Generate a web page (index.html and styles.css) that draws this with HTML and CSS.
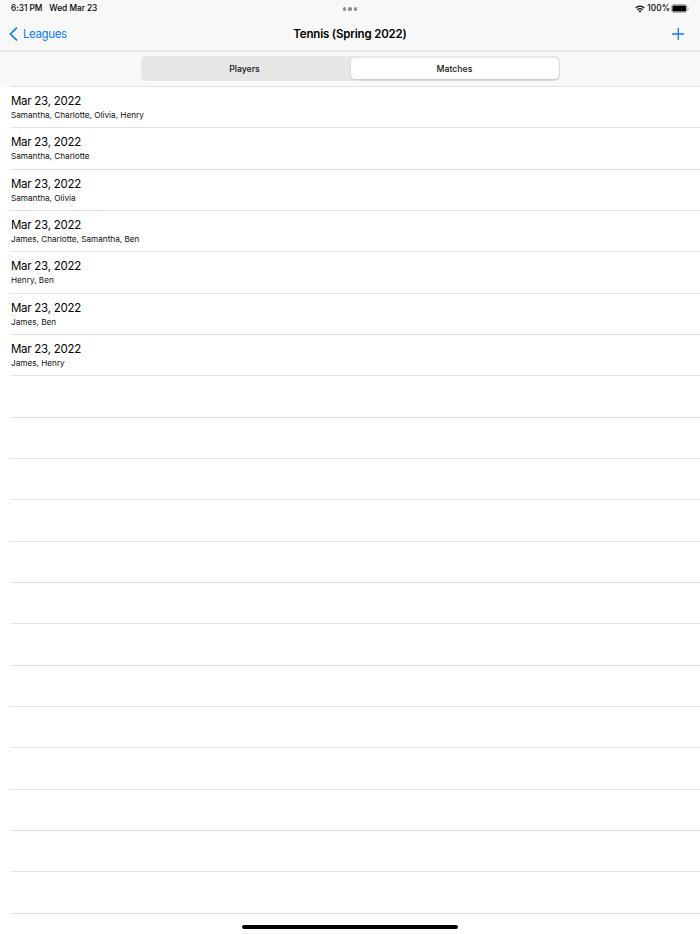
FILE: index.html
```html
<!DOCTYPE html>
<html lang="en">
<head>
    <meta charset="UTF-8">
    <meta name="viewport" content="width=device-width, initial-scale=1.0">
    <title>Tennis (Spring 2022)</title>
    <link rel="stylesheet" href="styles.css">
</head>
<body>
    <header class="top">
        <div class="status">
            <div class="status-left">
                <span class="time">6:31 PM</span>
                <span class="day">Wed Mar 23</span>
            </div>
            <div class="dots"><i></i><i></i><i></i></div>
            <div class="status-right">
                <svg class="wifi" width="10" height="8" viewBox="0 0 20 16">
                    <path d="M1.4 6a12.2 12.2 0 0 1 17.2 0M4.8 9.5a7.4 7.4 0 0 1 10.4 0" fill="none" stroke="#111" stroke-width="2.5"/>
                    <path d="M10 15.2l-3.1-3.1a4.5 4.5 0 0 1 6.2 0z" fill="#111"/>
                </svg>
                <span class="percent">100%</span>
                <svg class="battery" width="18" height="9" viewBox="0 0 18 9">
                    <rect x="0.5" y="0.5" width="15.6" height="8" rx="2.4" fill="none" stroke="#a6a6a6" stroke-width="0.9"/>
                    <rect x="1.4" y="1.5" width="13.8" height="6" rx="1.3" fill="#000"/>
                    <path d="M16.9 3.1v2.8q1-.4 1-1.4t-1-1.4z" fill="#a6a6a6"/>
                </svg>
            </div>
        </div>
        <nav class="navbar">
            <a class="back">
                <svg width="9" height="14" viewBox="0 0 9 14">
                    <path d="M7.4 1.2L1.3 7l6.1 5.8" fill="none" stroke="#087cff" stroke-width="1.7" stroke-linecap="round" stroke-linejoin="round"/>
                </svg>
                <span>Leagues</span>
            </a>
            <h1>Tennis (Spring 2022)</h1>
            <a class="add">
                <svg width="12" height="12" viewBox="0 0 12 12">
                    <path d="M6.3 .5v11M.5 6h11.4" stroke="#087cff" stroke-width="1.3" stroke-linecap="round"/>
                </svg>
            </a>
        </nav>
    </header>
    <div class="toolbar">
        <div class="segmented">
            <button>Players</button>
            <button class="selected">Matches</button>
        </div>
    </div>
    <ul class="matches">
        <li><h2>Mar 23, 2022</h2><p>Samantha, Charlotte, Olivia, Henry</p></li>
        <li><h2>Mar 23, 2022</h2><p>Samantha, Charlotte</p></li>
        <li><h2>Mar 23, 2022</h2><p>Samantha, Olivia</p></li>
        <li><h2>Mar 23, 2022</h2><p>James, Charlotte, Samantha, Ben</p></li>
        <li><h2>Mar 23, 2022</h2><p>Henry, Ben</p></li>
        <li><h2>Mar 23, 2022</h2><p>James, Ben</p></li>
        <li><h2>Mar 23, 2022</h2><p>James, Henry</p></li>
        <li></li>
        <li></li>
        <li></li>
        <li></li>
        <li></li>
        <li></li>
        <li></li>
        <li></li>
        <li></li>
        <li></li>
        <li></li>
        <li></li>
        <li></li>
    </ul>
    <div class="home-indicator"></div>
</body>
</html>
```
FILE: styles.css
```css
* {
    box-sizing: border-box;
}
body {
    margin: 0;
    height: 934px;
    overflow: hidden;
    position: relative;
    background-color: #fff;
    color: #000;
    font-family: Inter, "Liberation Sans", sans-serif;
}
.top {
    height: 52px;
    background-color: #f8f8f8;
    border-bottom: 2px solid #e8e8e8;
}
.status {
    display: grid;
    grid-template-columns: 1fr auto 1fr;
    align-items: center;
    height: 17px;
    padding: 0 11px;
    font-size: 8.3px;
    font-weight: 500;
    line-height: 17px;
}
.status-left {
    display: flex;
    gap: 7px;
    letter-spacing: -0.02px;
}
.status-right {
    display: flex;
    align-items: center;
    justify-content: flex-end;
}
.wifi {
    margin-right: 2.5px;
}
.percent {
    margin-right: 1px;
    letter-spacing: 0.1px;
}
.dots {
    display: flex;
    gap: 2px;
    padding-top: 1px;
}
.dots i {
    width: 3.5px;
    height: 3.5px;
    border-radius: 50%;
    background-color: #8c8c8c;
}
.navbar {
    display: grid;
    grid-template-columns: 1fr auto 1fr;
    align-items: center;
    height: 34px;
    padding: 0 9px;
}
.back {
    display: flex;
    align-items: center;
    gap: 5px;
    color: #087cff;
    font-size: 11.5px;
    letter-spacing: -0.4px;
}
.navbar h1 {
    margin: 0;
    font-size: 11.5px;
    font-weight: 600;
    letter-spacing: -0.18px;
}
.add {
    display: flex;
    justify-content: flex-end;
    padding-right: 7px;
}
.toolbar {
    display: flex;
    justify-content: center;
    height: 35px;
    padding-top: 4px;
    background-color: #f8f8f8;
}
.segmented {
    display: flex;
    width: 419px;
    height: 25px;
    padding: 2px 1px 2px 0;
    border-radius: 5px;
    background-color: #e7e7e7;
}
.segmented button {
    flex: 1;
    padding: 0;
    border: none;
    border-radius: 4.5px;
    background: none;
    color: #111;
    font-family: inherit;
    font-size: 8.7px;
    font-weight: 500;
}
.segmented .selected {
    margin-left: 2px;
    background-color: #fff;
    box-shadow: 0 1px 2px rgba(0, 0, 0, 0.15);
}
.matches {
    list-style: none;
    margin: -1px 0 0 11px;
    padding: 0;
    border-top: 1px solid #e2e2e2;
}
.matches li {
    height: 41.34px;
    padding-top: 7px;
    border-bottom: 1px solid #e2e2e2;
}
.matches h2 {
    margin: 0;
    font-size: 11.5px;
    font-weight: 400;
    line-height: 15px;
    letter-spacing: -0.27px;
}
.matches p {
    margin: 0;
    font-size: 8.2px;
    line-height: 12px;
    color: #111;
}
.home-indicator {
    position: absolute;
    left: 242px;
    bottom: 5px;
    width: 216px;
    height: 4px;
    border-radius: 2px;
    background-color: #000;
}
```
